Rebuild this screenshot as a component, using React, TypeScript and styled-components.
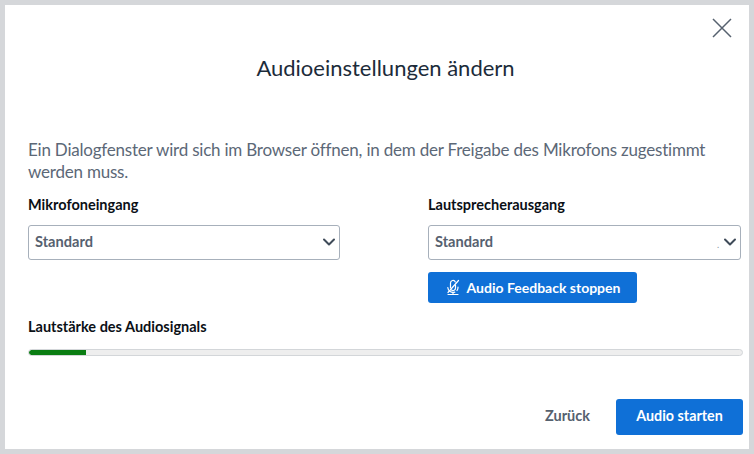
import { FC } from "react";
import styled, { createGlobalStyle } from "styled-components";
import { ChevronDown } from "lucide-react";

const GlobalStyle = createGlobalStyle`
  html, body {
    margin: 0;
    padding: 0;
    background: #fff;
  }
  body {
    font-family: Lato, "Noto Sans", sans-serif;
  }
`;

const Frame = styled.div`
  box-sizing: border-box;
  width: 754px;
  height: 454px;
  border: 5px solid #d5d7da;
  background: #fff;
  padding: 0 6px 0 23px;
  display: flex;
  flex-direction: column;
`;

const Header = styled.div`
  display: flex;
  justify-content: flex-end;
  height: 48px;
  padding: 10px 10px 0 0;
  box-sizing: border-box;
`;

const CloseIcon = styled.svg`
  width: 24px;
  height: 24px;
  display: block;
`;

const Title = styled.h1`
  margin: 0;
  font-size: 22px;
  line-height: 30px;
  font-weight: 400;
  color: #1c2b3a;
  text-align: center;
`;

const Message = styled.p`
  margin: 56px 0 0;
  width: 690px;
  font-size: 17px;
  letter-spacing: -0.21px;
  line-height: 22px;
  color: #5c6877;
`;

const Columns = styled.div`
  display: grid;
  grid-template-columns: 312px 313px;
  column-gap: 88px;
  margin-top: 11px;
`;

const Column = styled.div`
  display: flex;
  flex-direction: column;
  align-items: flex-start;
`;

const FieldLabel = styled.div`
  font-size: 14.5px;
  line-height: 22px;
  font-weight: 700;
  color: #0b1016;
`;

const Select = styled.div`
  box-sizing: border-box;
  width: 100%;
  height: 35px;
  margin-top: 9px;
  padding: 0 0 2px 6px;
  display: flex;
  align-items: center;
  justify-content: space-between;
  border: 1px solid #a7b0bb;
  border-radius: 3px;
  font-size: 14.6px;
  font-weight: 700;
  color: #56616f;
`;

const SelectEnd = styled.span`
  display: flex;
  align-items: center;
`;

const StrayDot = styled.span`
  font-size: 9px;
  font-weight: 400;
  line-height: 1;
  margin: 6px 1px 0 0;
  color: #8a94a0;
`;

const BlueButton = styled.button<{ $large?: boolean }>`
  box-sizing: border-box;
  display: flex;
  align-items: center;
  justify-content: center;
  gap: 6px;
  border: 0;
  padding: 0 0 ${(p) => (p.$large ? "3px" : "1px")};
  border-radius: 3px;
  background: #0f70d7;
  color: #fff;
  font-family: inherit;
  font-weight: 700;
  font-size: ${(p) => (p.$large ? "14.3px" : "14px")};
  width: ${(p) => (p.$large ? "127px" : "209px")};
  height: ${(p) => (p.$large ? "36px" : "31px")};
`;

const FeedbackRow = styled.div`
  margin-top: 12px;
`;

const LevelSection = styled.div`
  margin-top: 13px;
`;

const Meter = styled.div`
  box-sizing: border-box;
  width: 715px;
  height: 7px;
  margin-top: 11px;
  border: 1px solid #d3d6d9;
  border-radius: 4px;
  background: #eeeeee;
  overflow: hidden;
`;

const MeterFill = styled.div`
  height: 100%;
  background: #0a7d12;
  border-radius: 3px 0 0 3px;
`;

const Footer = styled.div`
  display: flex;
  justify-content: flex-end;
  align-items: center;
  gap: 26px;
  margin-top: 43px;
`;

const BackButton = styled.button`
  border: 0;
  padding: 0 0 3px;
  background: none;
  font-family: inherit;
  font-size: 14.5px;
  font-weight: 700;
  color: #56616f;
`;

const MicOffIcon: FC = () => (
  <svg width="16" height="17" viewBox="0 0 16 17" fill="none" stroke="#fff" strokeWidth="1.2" strokeLinecap="round">
    <path d="M5.5 9V4a2.5 2.5 0 0 1 4.8-1M10.5 6v3a2.5 2.5 0 0 1-4 2" />
    <path d="M2.8 8.5a5.2 5.2 0 0 0 7 4.6M13 8v.5a5 5 0 0 1-1 3" />
    <path d="M8 13.5V15M3 15.5h10" />
    <path d="M3 13.5 13.5 1.5" />
  </svg>
);

const App: FC = () => (
  <>
    <GlobalStyle />
    <Frame>
      <Header>
        <CloseIcon viewBox="0 0 24 24" fill="none" stroke="#56616f" strokeWidth="1.5">
          <path d="M4 4l18 18M22 4L4 22" />
        </CloseIcon>
      </Header>
      <Title>Audioeinstellungen ändern</Title>
      <Message>
        Ein Dialogfenster wird sich im Browser öffnen, in dem der Freigabe des Mikrofons zugestimmt werden muss.
      </Message>
      <Columns>
        <Column>
          <FieldLabel>Mikrofoneingang</FieldLabel>
          <Select>
            Standard
            <ChevronDown size={20} strokeWidth={2.4} color="#3f4b59" />
          </Select>
        </Column>
        <Column>
          <FieldLabel>Lautsprecherausgang</FieldLabel>
          <Select>
            Standard
            <SelectEnd>
              <StrayDot>.</StrayDot>
              <ChevronDown size={20} strokeWidth={2.4} color="#3f4b59" />
            </SelectEnd>
          </Select>
          <FeedbackRow>
            <BlueButton>
              <MicOffIcon />
              Audio Feedback stoppen
            </BlueButton>
          </FeedbackRow>
        </Column>
      </Columns>
      <LevelSection>
        <FieldLabel>Lautstärke des Audiosignals</FieldLabel>
        <Meter>
          <MeterFill style={{ width: "8%" }} />
        </Meter>
      </LevelSection>
      <Footer>
        <BackButton>Zurück</BackButton>
        <BlueButton $large>Audio starten</BlueButton>
      </Footer>
    </Frame>
  </>
);

export default App;
